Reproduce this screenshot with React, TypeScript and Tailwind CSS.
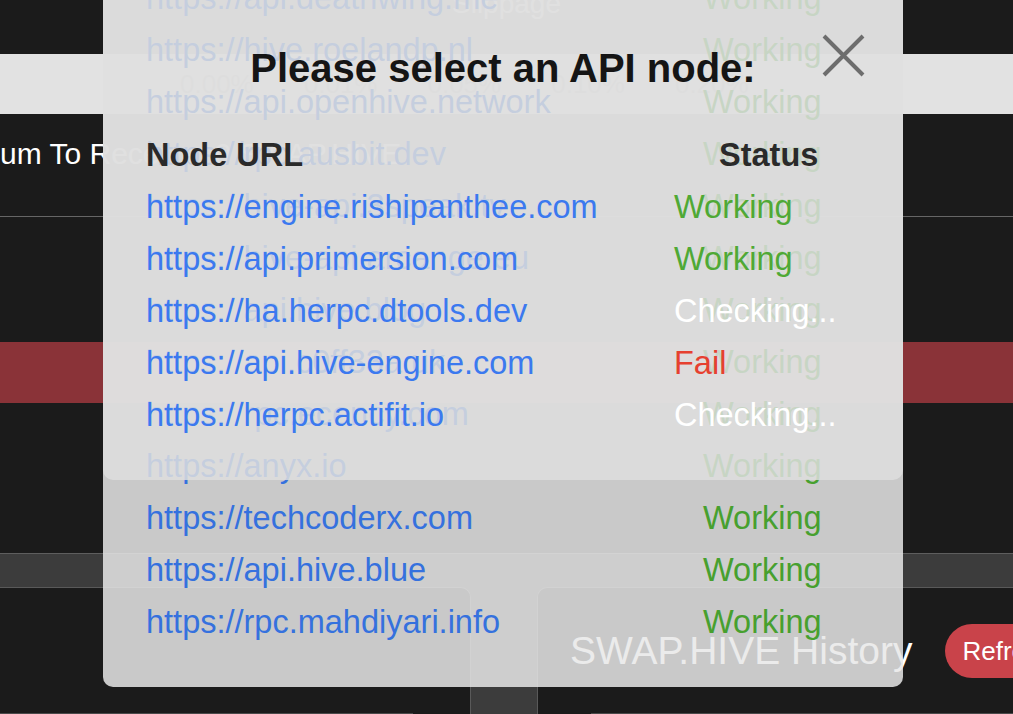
import React from "react";

interface NodeRow {
	url: string;
	status: "Working" | "Checking..." | "Fail";
}

// Hive nodes: the modal underneath, mostly scrolled off the top
const hiveNodes: NodeRow[] = [
	{ url: "https://api.hive.blog", status: "Working" },
	{ url: "https://api.deathwing.me", status: "Working" },
	{ url: "https://hive.roelandp.nl", status: "Working" },
	{ url: "https://api.openhive.network", status: "Working" },
	{ url: "https://rpc.ausbit.dev", status: "Working" },
	{ url: "https://hive-api.3speak.tv", status: "Working" },
	{ url: "https://hive-api.arcange.eu", status: "Working" },
	{ url: "https://api.hive.blog", status: "Working" },
	{ url: "https://api.c0ff33a.uk", status: "Working" },
	{ url: "https://rpc.ecency.com", status: "Working" },
	{ url: "https://anyx.io", status: "Working" },
	{ url: "https://techcoderx.com", status: "Working" },
	{ url: "https://api.hive.blue", status: "Working" },
	{ url: "https://rpc.mahdiyari.info", status: "Working" },
];

// Hive-Engine nodes: the modal on top
const engineNodes: NodeRow[] = [
	{ url: "https://engine.rishipanthee.com", status: "Working" },
	{ url: "https://api.primersion.com", status: "Working" },
	{ url: "https://ha.herpc.dtools.dev", status: "Checking..." },
	{ url: "https://api.hive-engine.com", status: "Fail" },
	{ url: "https://herpc.actifit.io", status: "Checking..." },
];

function statusClass(status: NodeRow["status"]) {
	if (status === "Working") return "text-[#4fa935]";
	if (status === "Fail") return "text-[#e6402f]";
	return "text-white";
}

function CloseIcon() {
	return (
		<svg viewBox="0 0 43 43" className="size-[43px]">
			<path
				d="M2 2 L41 41 M41 2 L2 41"
				stroke="#6d6d6d"
				strokeWidth="4"
				fill="none"
			/>
		</svg>
	);
}

function BackgroundPage() {
	return (
		<div className="flex h-full flex-col bg-[#1b1b1b]">
			<div className="flex h-[54px] justify-center">
				<span className="-mt-[14px] text-[28px] leading-[36px] text-white">
					Slippage
				</span>
			</div>

			<div className="flex h-[60px] items-center gap-[50px] bg-[#e2e2e2] pl-[180px] text-[26px] text-[#7a7a7a]">
				<span>0.00%</span>
				<span>0.01%</span>
				<span>0.05%</span>
				<span>0.10%</span>
				<span>0.20%</span>
			</div>

			<div className="h-[102px] pt-[22px]">
				<span className="-ml-[80px] block whitespace-nowrap text-[30px] leading-[36px] text-white">
					Minimum To Receive: 0 SWAP.HIVE
				</span>
			</div>
			<div className="h-px bg-[#666]" />

			<div className="h-[125px]" />
			<div className="h-[61px] bg-[#8a3338]" />
			<div className="h-[150px]" />

			<div className="flex flex-1 border-t border-[#5e5e5e] bg-[#3c3c3c] pt-[33px]">
				<div className="flex w-[471px] shrink-0 flex-col justify-end rounded-tr-[10px] border-r border-t border-[#595959] bg-[#1b1b1b]">
					<div className="h-px w-[413px] bg-[#4a4a4a]" />
				</div>
				<div className="ml-[66px] flex min-w-0 flex-1 flex-col overflow-hidden rounded-tl-[10px] border-l border-t border-[#595959] bg-[#1b1b1b]">
					<div className="flex items-start pl-[32px] pt-[36px]">
						<span className="shrink-0 whitespace-nowrap text-[39px] leading-[54px] text-white">
							SWAP.HIVE History
						</span>
						<button
							type="button"
							className="ml-[33px] h-[54px] shrink-0 whitespace-nowrap rounded-full bg-[#c9434a] px-[17px] text-[26px] text-white"
						>
							Refresh
						</button>
					</div>
					<div className="mt-auto ml-[53px] h-px bg-[#4a4a4a]" />
				</div>
			</div>
		</div>
	);
}

export default function App() {
	return (
		<div className="relative h-[714px] w-[1013px] overflow-hidden font-['Liberation_Sans',Arial,sans-serif]">
			<BackgroundPage />

			{/* Hive node picker, underneath */}
			<div className="absolute bottom-[27px] left-[103px] w-[800px] rounded-[10px] bg-[rgba(232,232,232,0.85)] px-[43px] pb-[39px] pt-[44px]">
				<h2 className="text-center text-[40px] font-bold leading-[48px] text-[#151515]">
					Please select an API node:
				</h2>
				<div className="mt-[37px] grid grid-cols-[557px_1fr] text-[32.5px] leading-[52px]">
					<div className="font-bold text-[#2a2a2a]">Node URL</div>
					<div className="font-bold text-[#2a2a2a]">Status</div>
					{hiveNodes.map((node, i) => (
						<React.Fragment key={`${node.url}-${i}`}>
							<div className="whitespace-nowrap text-[#3571de]">{node.url}</div>
							<div className="whitespace-nowrap text-[#47a02f]">{node.status}</div>
						</React.Fragment>
					))}
				</div>
			</div>

			{/* Hive-Engine node picker, on top */}
			<div className="absolute left-[103px] top-0 h-[480px] w-[800px] rounded-b-[10px] bg-[rgba(222,222,222,0.85)] px-[43px] pt-[44px]">
				<button type="button" className="absolute right-[38px] top-[34px]">
					<CloseIcon />
				</button>
				<h2 className="text-center text-[40px] font-bold leading-[48px] text-[#151515]">
					Please select an API node:
				</h2>
				<div className="mt-[37px] grid grid-cols-[528px_1fr] text-[32.5px] leading-[52px]">
					<div className="font-bold text-[#2a2a2a]">Node URL</div>
					<div className="pl-[45px] font-bold text-[#2a2a2a]">Status</div>
					{engineNodes.map((node) => (
						<React.Fragment key={node.url}>
							<div className="whitespace-nowrap text-[#3b79ef]">{node.url}</div>
							<div className={`whitespace-nowrap ${statusClass(node.status)}`}>
								{node.status}
							</div>
						</React.Fragment>
					))}
				</div>
			</div>
		</div>
	);
}
